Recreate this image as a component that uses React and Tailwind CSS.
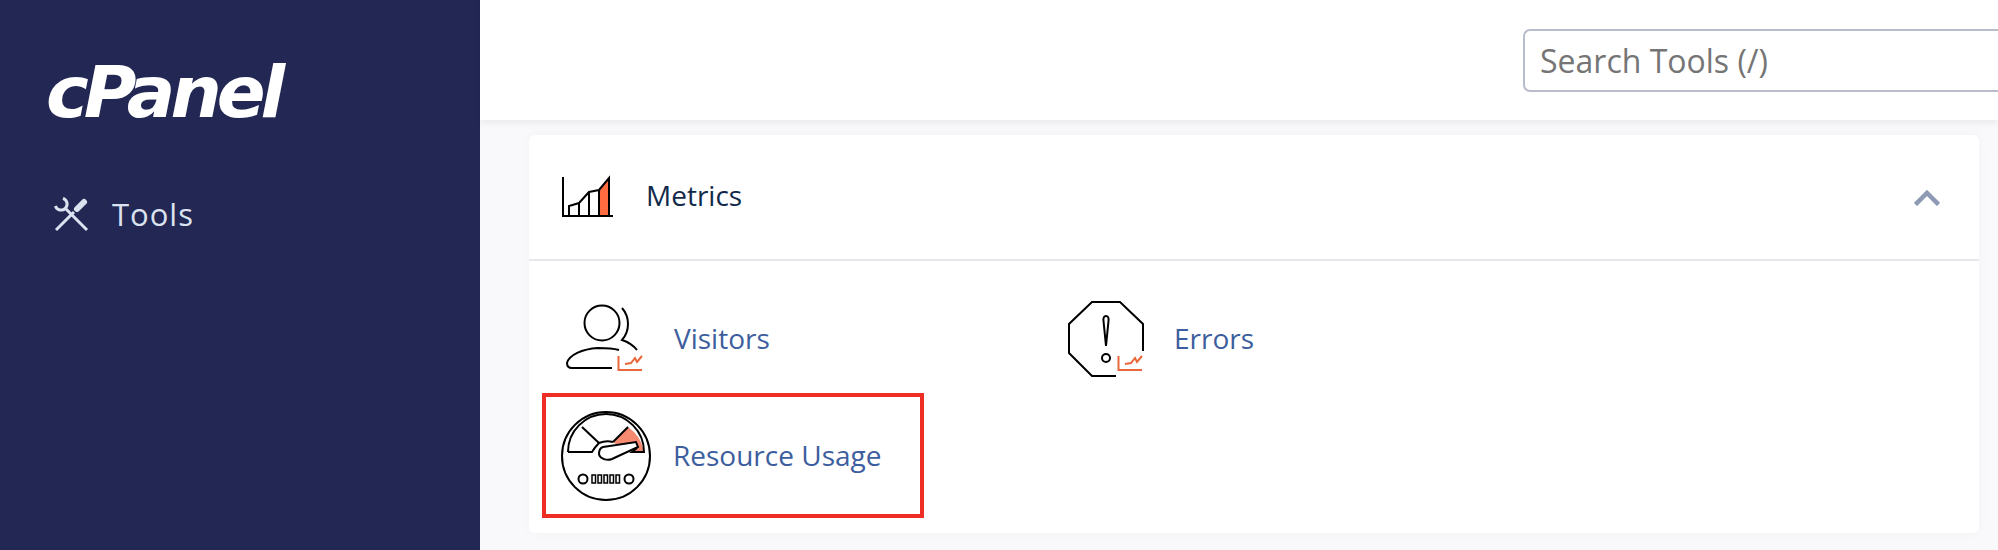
const font = { fontFamily: '"Open Sans", sans-serif' };

const MetricsIcon = () => (
  <svg width="56" height="44" viewBox="0 0 56 44" fill="none" stroke="#000" strokeWidth="2">
    <path d="M39 15 L49 3 V41 H39 Z" fill="#ff6c40" stroke="none" />
    <path d="M3 2 V41 H53" />
    <path d="M9 41 V31 L19 28 L29 17 L39 15 L49 3 V41" />
    <path d="M19 28 V41 M29 17 V41 M39 15 V41" />
  </svg>
);

const ChartBadge = () => (
  <g stroke="#e8683c" strokeWidth="2" fill="none">
    <path d="M58.5 61 V75 H82" />
    <path d="M65 69 L71 68 L75 63 L77 67 L82 61" />
  </g>
);

const VisitorsIcon = () => (
  <svg width="90" height="85" viewBox="0 0 90 85" fill="none" stroke="#000" strokeWidth="2">
    <circle cx="42" cy="28" r="17.5" />
    <path d="M62 13 C70 22 70 36 62 45 C68 47 73 50 77 55" />
    <path d="M59 55 C52 53 45 53 38 53 C22 54 9 60 7 68 C7 71 9 73 12 73 H52" />
    <ChartBadge />
  </svg>
);

const ErrorsIcon = () => (
  <svg width="90" height="85" viewBox="0 0 90 85" fill="none" stroke="#000" strokeWidth="2">
    <path d="M83 56 V29 L60 7 H32 L9 29 V58 L32 81 H56" />
    <path d="M46 21 C44 21 43 23 43.5 26 L46 51 L48.5 26 C49 23 48 21 46 21 Z" />
    <circle cx="46" cy="63" r="4" />
    <ChartBadge />
  </svg>
);

const GaugeIcon = () => (
  <svg width="92" height="90" viewBox="0 0 92 90" fill="none" stroke="#000" strokeWidth="2">
    <circle cx="46" cy="45" r="44" />
    <path d="M53 31 L68 16 A38 38 0 0 1 84 41 H72 L77 36 L60 36 Z" fill="#f58a70" stroke="none" />
    <path d="M8 41 A38 38 0 0 1 84 41 H72 L77 37" />
    <path d="M53 31 L68 16" />
    <path d="M8 41 H32 C35 36 37 34 39 32 C44 30 49 30 53 31" />
    <path d="M22 16 L39 32" />
    <path d="M43 36 L76 31 L78 36 L52 48 C47 50 40 48 39 43 C39 40 40 37 43 36 Z" fill="#fff" />
    <circle cx="23" cy="68" r="4.5" />
    <circle cx="69" cy="68" r="4.5" />
    <g strokeWidth="1.5">
      <rect x="32" y="64" width="3.5" height="8" />
      <rect x="38" y="64" width="3.5" height="8" />
      <rect x="44" y="64" width="3.5" height="8" />
      <rect x="50" y="64" width="3.5" height="8" />
      <rect x="56" y="64" width="3.5" height="8" />
    </g>
  </svg>
);

const ToolsIcon = () => (
  <svg width="36" height="36" viewBox="0 0 36 36" fill="none" stroke="#dbe2f0" strokeWidth="3">
    <path d="M34 34 L13 13" />
    <path d="M10 2.4 A6 6 0 1 1 2.4 10" />
    <path d="M3 34 L21 16" />
    <path d="M24 13 L31 6" strokeWidth="6" strokeLinecap="round" />
  </svg>
);

const ToolLink = ({ icon, label }) => (
  <a className="flex items-center gap-[24px] text-[28px] text-[#3d5e9e]" href="#">
    {icon}
    <span>{label}</span>
  </a>
);

export default function App() {
  return (
    <div className="flex h-[550px] w-[1998px] overflow-hidden bg-[#f9f9fb]" style={font}>
      {/* Sidebar */}
      <aside className="w-[480px] shrink-0 bg-[#222853] pl-[46px]">
        <div
          className="mt-[52px] text-[72px] leading-[80px] font-bold italic tracking-[-5px] text-white"
          style={{ fontFamily: '"DejaVu Sans", sans-serif' }}
        >
          cPanel
        </div>
        <div className="mt-[59px] flex items-center gap-[23px] pl-[7px] text-[31px] tracking-[1px] text-[#dbe2f0]">
          <ToolsIcon />
          <span>Tools</span>
        </div>
      </aside>

      <div className="min-w-0 flex-1">
        {/* Top bar */}
        <header className="flex h-[120px] items-center overflow-hidden bg-white shadow-[0_2px_8px_rgba(0,0,0,0.08)]">
          <div className="ml-auto h-[63px] w-[475px] shrink-0 rounded-l-[7px] border-2 border-r-0 border-[#b9bccb] pl-[15px] text-[32px] leading-[59px] text-[#757575]">
            Search Tools (/)
          </div>
        </header>

        {/* Metrics card */}
        <section className="mt-[15px] ml-[49px] h-[398px] w-[1450px] rounded-[6px] bg-white shadow-[0_0_12px_rgba(0,0,0,0.03)]">
          <div className="flex h-[126px] items-center border-b-2 border-[#e6e8ec] pr-[39px] pl-[31px]">
            <MetricsIcon />
            <span className="mb-[4px] ml-[30px] text-[28px] text-[#12294a]">Metrics</span>
            <svg className="mt-[2px] ml-auto" width="26" height="16" viewBox="0 0 26 16" fill="none" stroke="#8e99b3" strokeWidth="4.5">
              <path d="M1.5 14.5 L13 3 L24.5 14.5" />
            </svg>
          </div>
          <div className="flex h-[132px] items-start pt-[34px] pl-[31px]">
            <div className="w-[500px]">
              <ToolLink icon={<VisitorsIcon />} label="Visitors" />
            </div>
            <ToolLink icon={<ErrorsIcon />} label="Errors" />
          </div>
          <div className="ml-[13px] flex h-[125px] w-[382px] items-center gap-[21px] border-4 border-[#ee2d24] pl-[14px] text-[28px] text-[#3d5e9e]">
            <GaugeIcon />
            <span className="mb-[2px]">Resource Usage</span>
          </div>
        </section>
      </div>
    </div>
  );
}
